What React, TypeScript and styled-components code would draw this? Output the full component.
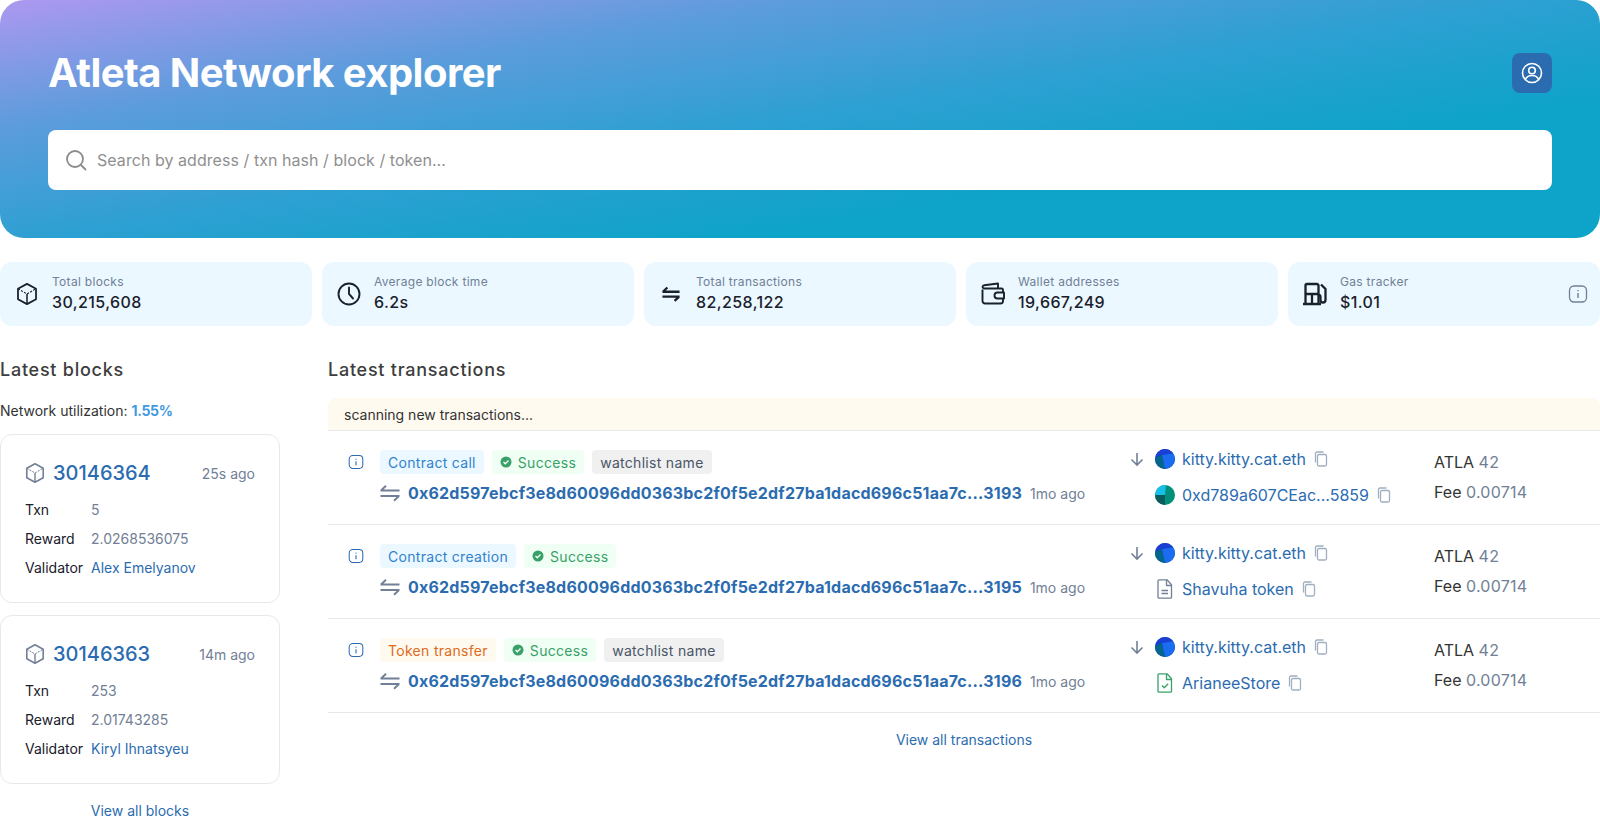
import React from "react";
import styled, { createGlobalStyle } from "styled-components";

const GlobalStyle = createGlobalStyle`
  html, body {
    margin: 0;
    padding: 0;
    background: #fff;
    overflow: hidden;
  }
  body {
    font-family: Inter, "Liberation Sans", sans-serif;
    font-size: 16px;
    color: #1a202c;
  }
  * {
    box-sizing: border-box;
  }
`;

const Page = styled.div`
  width: 1600px;
  height: 821px;
  overflow: hidden;
`;

const Hero = styled.header`
  height: 238px;
  padding: 49px 48px 0;
  border-radius: 24px;
  background: linear-gradient(171deg, #ad98f0 0%, #5c9cdc 26%, #2ca0d2 50%, #0ea3c9 72%);
`;

const HeroTop = styled.div`
  display: flex;
  justify-content: space-between;
  align-items: center;
  height: 48px;
  margin-bottom: 33px;
`;

const HeroTitle = styled.h1`
  margin: 0;
  font-family: Inter, sans-serif;
  font-size: 40px;
  line-height: 48px;
  font-weight: 700;
  letter-spacing: -0.55px;
  color: #fff;
`;

const UserButton = styled.button`
  width: 40px;
  height: 40px;
  padding: 0;
  border: 0;
  border-radius: 8px;
  background: #2b6cb0;
  color: #fff;
  display: flex;
  align-items: center;
  justify-content: center;
`;

const SearchBar = styled.div`
  height: 60px;
  display: flex;
  align-items: center;
  gap: 9px;
  padding: 0 16px;
  background: #fff;
  border-radius: 8px;
  color: #8c8c8c;
`;

const SearchText = styled.span`
  font-size: 16px;
  letter-spacing: 0.05px;
  color: #8f8f8f;
`;

const Stats = styled.section`
  display: grid;
  grid-template-columns: repeat(5, 1fr);
  gap: 10px;
  margin-top: 24px;
`;

const StatCard = styled.div`
  height: 64px;
  display: flex;
  align-items: center;
  gap: 13px;
  padding: 0 12px 0 15px;
  background: #ebf8ff;
  border-radius: 12px;
  color: #1a202c;
`;

const IconBox = styled.div`
  flex: none;
  width: 24px;
  height: 24px;
  display: flex;
  align-items: center;
  justify-content: center;
`;

const StatBody = styled.div`
  flex: 1;
`;

const StatLabel = styled.div`
  font-size: 12px;
  line-height: 16px;
  letter-spacing: 0.3px;
  color: #718096;
`;

const StatValue = styled.div`
  font-size: 16px;
  line-height: 24px;
  font-weight: 500;
  letter-spacing: 0.4px;
  color: #1a202c;
`;

const Columns = styled.div`
  display: grid;
  grid-template-columns: 280px 1fr;
  column-gap: 48px;
  margin-top: 32px;
`;

const SectionTitle = styled.h2`
  margin: 0;
  font-family: Inter, sans-serif;
  font-size: 18px;
  line-height: 24px;
  font-weight: 500;
  letter-spacing: 0.75px;
  color: #3d3d3d;
`;

const Utilization = styled.div`
  margin-top: 19px;
  font-size: 14px;
  line-height: 20px;
  color: #333;
`;

const UtilValue = styled.span`
  font-weight: 700;
  letter-spacing: -0.3px;
  color: #4299e1;
`;

const BlockList = styled.div`
  display: flex;
  flex-direction: column;
  gap: 12px;
  margin-top: 13px;
`;

const BlockCard = styled.article`
  height: 169px;
  padding: 24px;
  border: 1px solid #e8e8e8;
  border-radius: 12px;
`;

const BlockHead = styled.div`
  display: flex;
  align-items: center;
  height: 28px;
  margin-bottom: 13px;
  color: #718096;
`;

const BlockNumber = styled.a`
  margin-left: 8px;
  font-size: 20px;
  font-weight: 500;
  color: #2b6cb0;
`;

const BlockTime = styled.span`
  margin-left: auto;
  font-size: 14px;
  color: #718096;
`;

const BlockGrid = styled.div`
  display: grid;
  grid-template-columns: 66px 1fr;
  row-gap: 9px;
  font-size: 14px;
  line-height: 20px;
`;

const BlockLabel = styled.span`
  color: #1a202c;
`;

const BlockValue = styled.span`
  color: #718096;
`;

const TextLink = styled.a`
  color: #2b6cb0;
  font-size: 14px;
  line-height: 20px;
`;

const CenterLink = styled.div`
  text-align: center;
  margin-top: 16px;
`;

const ScanBar = styled.div`
  margin-top: 16px;
  height: 33px;
  display: flex;
  align-items: center;
  padding: 0 16px;
  background: #fffaf0;
  border-radius: 8px 8px 0 0;
  border-bottom: 1px solid #e8e8e8;
  font-size: 14px;
  color: #333;
`;

const TxRow = styled.div`
  height: 94px;
  display: grid;
  grid-template-columns: 32px 749px 305px 1fr;
  padding: 19px 0 0 20px;
  border-bottom: 1px solid #e8e8e8;
`;

const InfoCell = styled.div`
  padding-top: 4px;
  color: #2b6cb0;
`;

const TagRow = styled.div`
  display: flex;
  gap: 8px;
  height: 24px;
`;

const Tag = styled.span<{ $tone: "blue" | "green" | "gray" | "orange" }>`
  display: inline-flex;
  align-items: center;
  gap: 6px;
  height: 24px;
  padding: 0 8px;
  border-radius: 4px;
  font-size: 14px;
  letter-spacing: 0.3px;
  background: ${(p) =>
    ({ blue: "#ebf8ff", green: "#f0fff4", gray: "#f0f0f0", orange: "#fffaf0" })[p.$tone]};
  color: ${(p) =>
    ({ blue: "#3182ce", green: "#38a169", gray: "#4a5568", orange: "#dd6b20" })[p.$tone]};
`;

const HashRow = styled.div`
  display: flex;
  align-items: center;
  gap: 8px;
  margin-top: 7px;
  height: 24px;
  color: #718096;
`;

const Hash = styled.a`
  font-size: 16px;
  font-weight: 700;
  letter-spacing: 0.2px;
  color: #2b6cb0;
`;

const TxTime = styled.span`
  font-size: 14px;
  color: #718096;
`;

const Parties = styled.div`
  display: grid;
  grid-template-columns: 26px 1fr;
  align-content: start;
  row-gap: 16px;
  margin-top: -1px;
  align-items: center;
  color: #718096;
`;

const Party = styled.div`
  grid-column: 2;
  display: flex;
  align-items: center;
  height: 20px;
  gap: 7px;
  color: #a0aec0;
`;

const PartyName = styled.a`
  font-size: 16px;
  color: #2b6cb0;
`;

const Values = styled.div`
  display: flex;
  flex-direction: column;
  gap: 6px;
  font-size: 16px;
  line-height: 24px;
  color: #333;
`;

const Muted = styled.span`
  color: #718096;
`;

const Amount = styled(Muted)`
  letter-spacing: 0.25px;
`;

const IconSvg = styled.svg`
  flex: none;
  display: block;
`;

const CubeIcon = ({ size = 20 }: { size?: number }) => (
  <IconSvg width={size} height={size} viewBox="0 0 20 20" fill="none" stroke="currentColor" strokeLinejoin="round">
    <path d="M10 .8 18.200 5.200v9.600L10 19.200 1.800 14.800V5.200z" strokeWidth="1.600" />
    <path d="M1.800 5.200 10 10l8.200-4.800" strokeWidth="1" strokeDasharray="2 1.200" />
    <path d="M10 10v9" strokeWidth="1.400" />
  </IconSvg>
);

const ClockIcon = () => (
  <IconSvg width="24" height="24" viewBox="0 0 24 24" fill="none" stroke="currentColor" strokeWidth="1.900" strokeLinecap="round">
    <circle cx="12" cy="12" r="10.500" />
    <path d="M12 5.500V12l4 4.500" />
  </IconSvg>
);

const SwapIcon = ({ size = 20, width = 1.6 }: { size?: number; width?: number }) => (
  <IconSvg width={size} height={size} viewBox="0 0 20 20" fill="none" stroke="currentColor" strokeWidth={width}>
    <path d="M.5 7.500h19M1 7.500 6 2.800M19.500 13H.5M19 13l-5 4.700" />
  </IconSvg>
);

const WalletIcon = () => (
  <IconSvg width="24" height="24" viewBox="0 0 24 24" fill="none" stroke="currentColor" strokeWidth="1.900" strokeLinejoin="round">
    <path d="M1.500 7.500V19a2.500 2.500 0 0 0 2.500 2.500h15.500A2.500 2.500 0 0 0 22 19v-2.500M22 10.500V8a1.500 1.500 0 0 0-1.500-1.500H4A2.300 2.300 0 0 1 1.500 5c0-.900.700-1.500 1.700-1.700L17 1.500v5" />
    <path d="M23 10.500h-6.500a3 3 0 0 0 0 6H23z" />
  </IconSvg>
);

const GasIcon = () => (
  <IconSvg width="24" height="24" viewBox="0 0 24 24" fill="none" stroke="currentColor" strokeWidth="2.300">
    <path d="M2.500 22V3.500A1.500 1.500 0 0 1 4 2h10A1.500 1.500 0 0 1 15.500 3.500V22M0 22h18M2.500 12h13M9 12v10" />
    <path d="M18 2.500 22.500 7v11a2.500 2.500 0 0 1-5 0v-3a2 2 0 0 0-2-2" />
  </IconSvg>
);

const InfoIcon = ({ size = 20 }: { size?: number }) => (
  <IconSvg width={size} height={size} viewBox="0 0 20 20" fill="none" stroke="currentColor" strokeWidth="1.300">
    <rect x="1.500" y="2" width="17" height="16" rx="4.500" />
    <path d="M10 9v5M10 6v1.300" strokeWidth="1.400" />
  </IconSvg>
);

const SearchIcon = () => (
  <IconSvg width="24" height="24" viewBox="0 0 24 24" fill="none" stroke="currentColor" strokeWidth="1.800" strokeLinecap="round">
    <circle cx="11" cy="11" r="8" />
    <path d="m17 17 4.500 4.500" />
  </IconSvg>
);

const UserIcon = () => (
  <IconSvg width="22" height="22" viewBox="0 0 22 22" fill="none" stroke="currentColor" strokeWidth="1.600">
    <circle cx="11" cy="11" r="9.500" />
    <circle cx="11" cy="8.500" r="3.300" />
    <path d="M4.500 17.500c1-2.800 3.500-4 6.500-4s5.500 1.200 6.500 4" />
  </IconSvg>
);

const ArrowDownIcon = () => (
  <IconSvg width="16" height="16" viewBox="0 0 16 16" fill="none" stroke="currentColor" strokeWidth="1.600">
    <path d="M8 2v12M2.500 8.500 8 14l5.500-5.500" />
  </IconSvg>
);

const CopyIcon = () => (
  <IconSvg width="16" height="16" viewBox="0 0 16 16" fill="none" stroke="currentColor" strokeWidth="1.300">
    <rect x="4.500" y="3.500" width="9" height="11.500" rx="1.500" />
    <path d="M2.500 11.500V2.500A1.500 1.500 0 0 1 4 1h6.500" />
  </IconSvg>
);

const CheckBadge = () => (
  <IconSvg width="12" height="12" viewBox="0 0 12 12">
    <circle cx="6" cy="6" r="5.500" fill="currentColor" />
    <path d="m3.500 6 1.800 1.800 3.200-3.300" fill="none" stroke="#fff" strokeWidth="1.300" />
  </IconSvg>
);

const AvatarBlue = () => (
  <IconSvg width="20" height="20" viewBox="0 0 20 20">
    <defs>
      <clipPath id="avatar-blue">
        <circle cx="10" cy="10" r="10" />
      </clipPath>
    </defs>
    <g clipPath="url(#avatar-blue)">
      <rect width="20" height="20" fill="#0a3f8f" />
      <path d="M0 0h20v4L7 6 0 9z" fill="#1b3fd6" />
      <path d="M0 9l7-3 3 14H0z" fill="#05668d" />
      <path d="M7 6l13-2v8l-4 8H10z" fill="#1a6cf0" />
    </g>
  </IconSvg>
);

const AvatarTeal = () => (
  <IconSvg width="20" height="20" viewBox="0 0 20 20">
    <defs>
      <clipPath id="avatar-teal">
        <circle cx="10" cy="10" r="10" />
      </clipPath>
    </defs>
    <g clipPath="url(#avatar-teal)">
      <rect width="20" height="20" fill="#00907a" />
      <path d="M0 0h11l-1 10H0z" fill="#16bfe8" />
      <path d="M0 10h10v10H0z" fill="#0b5a5e" />
    </g>
  </IconSvg>
);

const DocIcon = ({ green }: { green?: boolean }) => (
  <IconSvg
    width="20"
    height="20"
    viewBox="0 0 20 20"
    fill="none"
    stroke={green ? "#38a169" : "#718096"}
    strokeWidth="1.300"
    strokeLinejoin="round"
  >
    <path d="M4 .8h8l4.500 5v12.400a1 1 0 0 1-1 1H4a1 1 0 0 1-1-1V1.800a1 1 0 0 1 1-1z" />
    <path d="M11.500 1v5.500h5" />
    {green ? <path d="m7 12.500 2.200 2.300 4-4" /> : <path d="M6.500 11.500h6.500M6.500 14.500h6.500" />}
  </IconSvg>
);

const stats = [
  { label: "Total blocks", value: "30,215,608", icon: <CubeIcon size={22} /> },
  { label: "Average block time", value: "6.2s", icon: <ClockIcon /> },
  { label: "Total transactions", value: "82,258,122", icon: <SwapIcon size={18} width={2.6} /> },
  { label: "Wallet addresses", value: "19,667,249", icon: <WalletIcon /> },
  { label: "Gas tracker", value: "$1.01", icon: <GasIcon /> },
];

const blocks = [
  { id: "30146364", time: "25s ago", txn: "5", reward: "2.0268536075", validator: "Alex Emelyanov" },
  { id: "30146363", time: "14m ago", txn: "253", reward: "2.01743285", validator: "Kiryl Ihnatsyeu" },
];

type Tx = {
  kind: string;
  tone: "blue" | "orange";
  watch: boolean;
  hash: string;
  to: string;
  toIcon: React.ReactNode;
};

const txs: Tx[] = [
  {
    kind: "Contract call",
    tone: "blue",
    watch: true,
    hash: "3193",
    to: "0xd789a607CEac...5859",
    toIcon: <AvatarTeal />,
  },
  {
    kind: "Contract creation",
    tone: "blue",
    watch: false,
    hash: "3195",
    to: "Shavuha token",
    toIcon: <DocIcon />,
  },
  {
    kind: "Token transfer",
    tone: "orange",
    watch: true,
    hash: "3196",
    to: "ArianeeStore",
    toIcon: <DocIcon green />,
  },
];

const App: React.FC = () => {
  return (
    <Page>
      <GlobalStyle />
      <Hero>
        <HeroTop>
          <HeroTitle>Atleta Network explorer</HeroTitle>
          <UserButton>
            <UserIcon />
          </UserButton>
        </HeroTop>
        <SearchBar>
          <SearchIcon />
          <SearchText>Search by address / txn hash / block / token...</SearchText>
        </SearchBar>
      </Hero>

      <Stats>
        {stats.map((s) => (
          <StatCard key={s.label}>
            <IconBox>{s.icon}</IconBox>
            <StatBody>
              <StatLabel>{s.label}</StatLabel>
              <StatValue>{s.value}</StatValue>
            </StatBody>
            {s.label === "Gas tracker" && (
              <Muted>
                <InfoIcon />
              </Muted>
            )}
          </StatCard>
        ))}
      </Stats>

      <Columns>
        <div>
          <SectionTitle>Latest blocks</SectionTitle>
          <Utilization>
            Network utilization: <UtilValue>1.55%</UtilValue>
          </Utilization>
          <BlockList>
            {blocks.map((b) => (
              <BlockCard key={b.id}>
                <BlockHead>
                  <CubeIcon />
                  <BlockNumber>{b.id}</BlockNumber>
                  <BlockTime>{b.time}</BlockTime>
                </BlockHead>
                <BlockGrid>
                  <BlockLabel>Txn</BlockLabel>
                  <BlockValue>{b.txn}</BlockValue>
                  <BlockLabel>Reward</BlockLabel>
                  <BlockValue>{b.reward}</BlockValue>
                  <BlockLabel>Validator</BlockLabel>
                  <TextLink>{b.validator}</TextLink>
                </BlockGrid>
              </BlockCard>
            ))}
          </BlockList>
          <CenterLink>
            <TextLink>View all blocks</TextLink>
          </CenterLink>
        </div>

        <div>
          <SectionTitle>Latest transactions</SectionTitle>
          <ScanBar>scanning new transactions...</ScanBar>
          {txs.map((t) => (
            <TxRow key={t.hash}>
              <InfoCell>
                <InfoIcon size={16} />
              </InfoCell>
              <div>
                <TagRow>
                  <Tag $tone={t.tone}>{t.kind}</Tag>
                  <Tag $tone="green">
                    <CheckBadge />
                    Success
                  </Tag>
                  {t.watch && <Tag $tone="gray">watchlist name</Tag>}
                </TagRow>
                <HashRow>
                  <SwapIcon size={20} width={1.9} />
                  <Hash>0x62d597ebcf3e8d60096dd0363bc2f0f5e2df27ba1dacd696c51aa7c...{t.hash}</Hash>
                  <TxTime>1mo ago</TxTime>
                </HashRow>
              </div>
              <Parties>
                <ArrowDownIcon />
                <Party>
                  <AvatarBlue />
                  <PartyName>kitty.kitty.cat.eth</PartyName>
                  <CopyIcon />
                </Party>
                <Party>
                  {t.toIcon}
                  <PartyName>{t.to}</PartyName>
                  <CopyIcon />
                </Party>
              </Parties>
              <Values>
                <div>
                  ATLA <Amount>42</Amount>
                </div>
                <div>
                  Fee <Amount>0.00714</Amount>
                </div>
              </Values>
            </TxRow>
          ))}
          <CenterLink>
            <TextLink>View all transactions</TextLink>
          </CenterLink>
        </div>
      </Columns>
    </Page>
  );
};

export default App;
